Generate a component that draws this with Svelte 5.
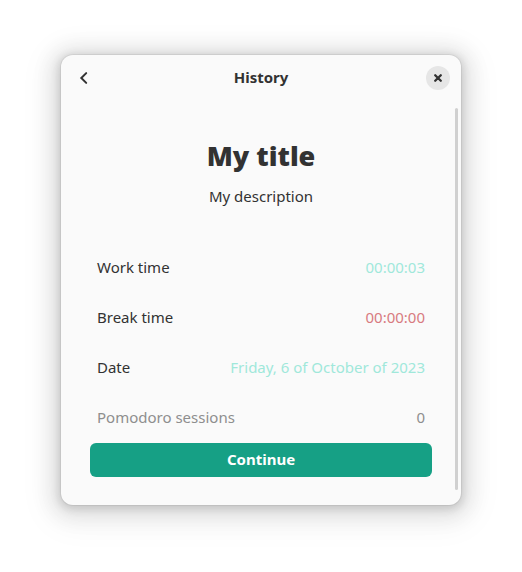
<script>
  const rows = [
    { label: 'Work time', value: '00:00:03', tone: 'mint' },
    { label: 'Break time', value: '00:00:00', tone: 'rose' },
    { label: 'Date', value: 'Friday, 6 of October of 2023', tone: 'mint' },
    { label: 'Pomodoro sessions', value: '0', tone: 'dim' }
  ];
</script>

<main class="desktop">
  <section class="window">
    <header>
      <button class="back" aria-label="Back">
        <svg width="16" height="16" viewBox="0 0 16 16"><path d="M10.2 3.1 5.3 8l4.9 4.9" /></svg>
      </button>
      <h1>History</h1>
      <button class="close" aria-label="Close">
        <svg width="16" height="16" viewBox="0 0 16 16"><path d="m5.2 5.2 5.6 5.6M10.8 5.2l-5.6 5.6" /></svg>
      </button>
    </header>
    <div class="scroller">
      <div class="content">
        <h2>My title</h2>
        <p>My description</p>
        <dl>
          {#each rows as row}
            <div class="row {row.tone}">
              <dt>{row.label}</dt>
              <dd>{row.value}</dd>
            </div>
          {/each}
        </dl>
        <button class="continue">Continue</button>
      </div>
      <div class="track"></div>
    </div>
  </section>
</main>

<style>
  :global(body) { margin: 0; background: #fff; }
  .desktop {
    box-sizing: border-box;
    min-height: 100vh;
    padding: 55px 61px 67px;
    display: flex;
    font: 15px/20px "Noto Sans", sans-serif;
    color: #323232;
  }
  .window {
    flex: 1;
    display: flex;
    flex-direction: column;
    border-radius: 12px;
    background: #fafafa;
    box-shadow: 0 0 0 1px rgba(0, 0, 0, 0.05), 0 2px 8px 2px rgba(0, 0, 0, 0.13), 0 3px 20px 10px rgba(0, 0, 0, 0.09), 0 6px 32px 16px rgba(0, 0, 0, 0.04);
  }
  header {
    display: grid;
    grid-template-columns: 24px 1fr 24px;
    align-items: center;
    height: 46px;
    padding: 0 11px;
  }
  h1, h2, p, dl, dd { margin: 0; }
  h1 { padding-bottom: 2px; font-size: 15px; line-height: 20px; font-weight: 700; text-align: center; }
  button { border: 0; padding: 0; font: inherit; color: inherit; }
  .back, .close {
    width: 24px;
    height: 24px;
    display: flex;
    align-items: center;
    justify-content: center;
    border-radius: 50%;
    background: none;
  }
  .close { background: #e6e6e6; }
  svg { fill: none; stroke: currentColor; stroke-width: 2; stroke-linecap: round; }
  .close svg { stroke-width: 2.3; }
  .scroller { flex: 1; display: flex; }
  .content {
    flex: 1;
    display: flex;
    flex-direction: column;
    padding: 35px 23px 28px 29px;
  }
  h2 { font-family: "Open Sans", "Noto Sans", sans-serif; font-size: 27px; line-height: 40px; font-weight: 800; text-align: center; }
  p { margin-top: 10px; text-align: center; }
  dl { margin-top: 36px; padding: 0 7px; }
  .row { height: 50px; display: flex; align-items: center; justify-content: space-between; }
  .mint dd { color: #a0e8da; }
  .rose dd { color: #d87a80; }
  .dim { color: #8e8e8e; }
  .continue {
    height: 34px;
    margin-top: auto;
    padding-bottom: 2px;
    border-radius: 6px;
    background: #16a085;
    color: #fff;
    font-weight: 700;
  }
  .track { width: 3px; margin: 7px 3px 15px 0; border-radius: 2px; background: #d0d0d0; }
</style>
